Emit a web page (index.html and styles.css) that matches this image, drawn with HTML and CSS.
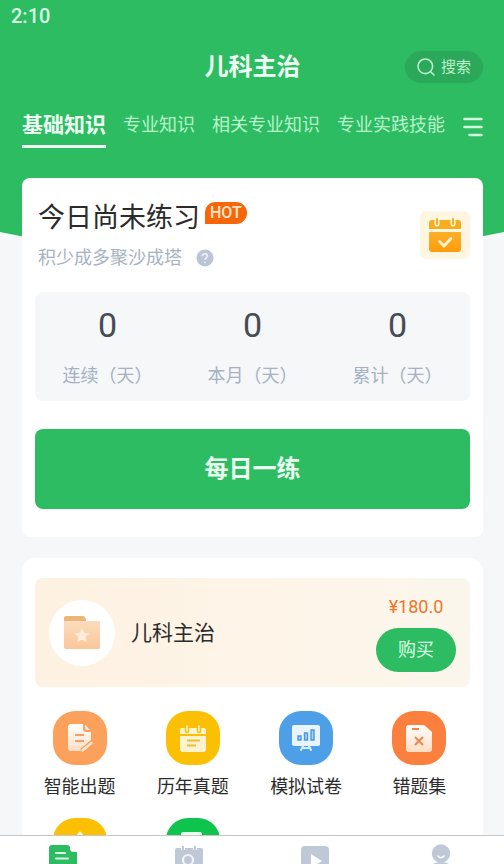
FILE: index.html
```html
<!DOCTYPE html>
<html lang="zh-CN">
<head>
<meta charset="utf-8">
<meta name="viewport" content="width=device-width, initial-scale=1">
<title>儿科主治</title>
<link rel="stylesheet" href="styles.css">
</head>
<body>
<div class="scroll">
  <header class="header">
    <div class="status">2:10</div>
    <div class="titlebar">
      <h1 class="title">儿科主治</h1>
      <button class="search" type="button">
        <svg width="18" height="18" viewBox="0 0 18 18" fill="none" stroke="currentColor" stroke-width="1.6" stroke-linecap="round"><circle cx="8.300" cy="8.300" r="7.300"/><path d="M13.500 13.500 17 17"/></svg>
        搜索
      </button>
    </div>
    <nav class="tabs">
      <a class="tab tab-active" href="#basic">基础知识</a>
      <a class="tab" href="#major">专业知识</a>
      <a class="tab" href="#related">相关专业知识</a>
      <a class="tab" href="#practice">专业实践技能</a>
      <button class="menu" type="button" aria-label="菜单">
        <svg width="20" height="20" viewBox="0 0 20 20" stroke="currentColor" stroke-width="2.600" stroke-linecap="round"><path d="M1.500 2h17M1.500 10h17M6.500 18h12"/></svg>
      </button>
    </nav>
  </header>

  <main class="main">
    <section class="card">
      <div class="practice">
        <div class="practice-text">
          <div class="headline"><h2 class="headline-text">今日尚未练习</h2><span class="hot">HOT</span></div>
          <div class="sub">积少成多聚沙成塔
            <svg width="18" height="18" viewBox="0 0 18 18"><circle cx="9" cy="9" r="8.500" fill="#bcc5d6"/><path d="M6.500 7.200C6.500 3.900 11.600 4 11.500 7c0 1.900-2.500 1.900-2.500 3.700M9 12.700v1.300" fill="none" stroke="#edf1f8" stroke-width="1.600"/></svg>
          </div>
        </div>
        <button class="calendar" type="button" aria-label="打卡日历">
          <svg width="34" height="36" viewBox="0 0 34 36">
            <defs><linearGradient id="cal" x1="0" y1="0" x2="0" y2="1"><stop offset="0" stop-color="#fbb02a"/><stop offset="1" stop-color="#ff9c0b"/></linearGradient></defs>
            <path d="M4 3h26q3 0 3 3v6H1V6q0-3 3-3z" fill="#f8ae1c"/>
            <path d="M1 15h32v17q0 3-3 3H4q-3 0-3-3z" fill="url(#cal)"/>
            <path d="M9 2v5M25 2v5" stroke="#fff6df" stroke-width="5" stroke-linecap="round"/>
            <path d="M9 2v5M25 2v5" stroke="#f8ae1c" stroke-width="2" stroke-linecap="round"/>
            <path d="m11.500 24.500 4.500 4.500 7-7.500" fill="none" stroke="#fff3d6" stroke-width="2.800" stroke-linecap="round"/>
          </svg>
        </button>
      </div>
      <dl class="stats">
        <div class="stat"><dd class="stat-value">0</dd><dt class="stat-label">连续（天）</dt></div>
        <div class="stat"><dd class="stat-value">0</dd><dt class="stat-label">本月（天）</dt></div>
        <div class="stat"><dd class="stat-value">0</dd><dt class="stat-label">累计（天）</dt></div>
      </dl>
      <button class="daily" type="button">每日一练</button>
    </section>

    <section class="card card-course">
      <div class="course">
        <span class="course-icon">
          <svg width="38" height="36" viewBox="0 0 38 36">
            <defs><linearGradient id="fold" x1="0" y1="0" x2="0" y2="1"><stop offset="0" stop-color="#fbdcbc"/><stop offset="1" stop-color="#fbc69b"/></linearGradient></defs>
            <path d="M1 3q0-2 2-2h17q2 0 3 4v5H1z" fill="#ecb67a"/>
            <path d="M1 6h35q1 0 1 1v26q0 1-1 1H3q-2 0-2-2z" fill="url(#fold)"/>
            <path d="m19 13 2.200 4.800 5.300.6-3.900 3.600 1 5.200-4.600-2.600-4.600 2.600 1-5.200-3.900-3.600 5.300-.6z" fill="#ffeddb"/>
          </svg>
        </span>
        <h2 class="course-name">儿科主治</h2>
        <div class="course-buy"><span class="price">¥180.0</span><button class="buy" type="button">购买</button></div>
      </div>
      <div class="grid">
        <a class="tool" href="#smart">
          <svg class="tool-icon orange" viewBox="0 0 54 54">
            <defs><linearGradient id="paper" x1="0" y1="0" x2="0" y2="1"><stop offset="0" stop-color="#fff"/><stop offset="1" stop-color="#ffddc4"/></linearGradient></defs>
            <path d="M18 13h12v5q0 3 3 3h5v8L27 40h-9q-3 0-3-3V16q0-3 3-3z" fill="url(#paper)"/>
            <path d="M32 13.500v3.500q0 2 2 2h3z" fill="#ffe9d8"/>
            <path d="M22 24h9M22 30h9" stroke="#f8a063" stroke-width="1.800"/>
            <path d="m29 40 9.500-8" stroke="#fba15c" stroke-width="5.500"/>
            <path d="m29.500 39.500 9-7.500" stroke="#ffe6d3" stroke-width="2.500" stroke-linecap="round"/>
          </svg>
          <span>智能出题</span>
        </a>
        <a class="tool" href="#past">
          <svg class="tool-icon yellow" viewBox="0 0 54 54">
            <path d="M16 17h22q2 0 2 2v4H14v-4q0-2 2-2z" fill="#fff5d0"/>
            <path d="M14 25h26v13q0 3-3 3H17q-3 0-3-3z" fill="#fff3cf"/>
            <path d="M21 15v5M33 15v5" stroke="#fbc004" stroke-width="4.500" stroke-linecap="round"/>
            <path d="M21 15v5M33 15v5" stroke="#fff5d0" stroke-width="1.600" stroke-linecap="round"/>
            <path d="M21 29.500h13M21 34.500h9" stroke="#eebd32" stroke-width="1.800"/>
          </svg>
          <span>历年真题</span>
        </a>
        <a class="tool" href="#mock">
          <svg class="tool-icon blue" viewBox="0 0 54 54">
            <rect x="13" y="14" width="28" height="21" rx="2" fill="#e8f4ff"/>
            <path d="m24 35-2 4M30 35l2 4M23 37h8" stroke="#d9ecff" stroke-width="2" stroke-linecap="round"/>
            <path d="M19 25h3v4h-3zM25.500 22h3v7h-3zM32 19h3v10h-3z" fill="#a8d3fb" stroke="#4898df" stroke-width="1.400"/>
          </svg>
          <span>模拟试卷</span>
        </a>
        <a class="tool" href="#wrong">
          <svg class="tool-icon red" viewBox="0 0 54 54">
            <path d="M17 14h15l8 7v17q0 3-3 3H17q-3 0-3-3V17q0-3 3-3z" fill="url(#paper)"/>
            <path d="M20 18h7" stroke="#f88247" stroke-width="2"/>
            <path d="m23 26 8 8M31 26l-8 8" stroke="#ed874f" stroke-width="2"/>
          </svg>
          <span>错题集</span>
        </a>
        <a class="tool" href="#favorites" aria-label="收藏">
          <svg class="tool-icon yellow" viewBox="0 0 54 54"><path d="M25 15q2-3 4 0l3 7 9 1-6.500 7 2 10-9.500-5-9.500 5 2-10-6.500-7 9-1z" fill="#fff5d0"/></svg>
        </a>
        <a class="tool" href="#notes" aria-label="笔记">
          <svg class="tool-icon green" viewBox="0 0 54 54"><path d="M17 14h17q2 0 2 3v23H17q-2 0-2-3V16q0-2 2-2z" fill="#e8fff0"/></svg>
        </a>
      </div>
    </section>
  </main>
</div>

<nav class="bottom">
  <a class="nav-item" href="#bank" aria-label="题库">
    <svg width="30" height="30" viewBox="0 0 30 30"><path d="M4 1h15q2 0 3 2v3q1 2 4 2h3v18q0 3-3 3H4q-3 0-3-3V4q0-3 3-3z" fill="#2dbc62"/><path d="M8 9h9M8 14.500h12" stroke="#d9f7e3" stroke-width="2" stroke-linecap="round"/></svg>
  </a>
  <a class="nav-item" href="#exam" aria-label="考试">
    <svg width="30" height="30" viewBox="0 0 30 30"><path d="M3 4h24q2 0 2 2v23H1V6q0-2 2-2z" fill="#bfc8d6"/><path d="M9 2v4M21 2v4" stroke="#fff" stroke-width="4"/><path d="M9 2v4M21 2v4" stroke="#bfc8d6" stroke-width="2"/><circle cx="14" cy="16" r="5" fill="none" stroke="#f1f4f8" stroke-width="2.200"/></svg>
  </a>
  <a class="nav-item" href="#video" aria-label="课程">
    <svg width="30" height="30" viewBox="0 0 30 30"><path d="M5 2h20q4 0 4 4v23H1V6q0-4 4-4z" fill="#bfc8d6"/><path d="m11 10 11 7-11 7z" fill="#fff"/></svg>
  </a>
  <a class="nav-item" href="#me" aria-label="我的">
    <svg width="30" height="30" viewBox="0 0 30 30"><circle cx="15" cy="9.500" r="9.200" fill="#bfc8d6"/><path d="M3 29q0-11 12-11t12 11z" fill="#bfc8d6"/><path d="M12 12q3 3.500 6 0" fill="none" stroke="#fff" stroke-width="1.500" stroke-linecap="round"/></svg>
  </a>
</nav>
</body>
</html>
```
FILE: styles.css
```css
* {
  box-sizing: border-box;
  margin: 0;
}

body {
  display: flex;
  flex-direction: column;
  height: 100vh;
  background: #f5f7f9;
  color: #2b2b2b;
  font-family: Roboto, "Noto Sans CJK SC", sans-serif;
  font-size: 18px;
  line-height: 26px;
}

button {
  padding: 0;
  border: 0;
  background: none;
  color: inherit;
  font: inherit;
}

a {
  color: inherit;
  text-decoration: none;
}

svg {
  display: block;
  flex: none;
}

.scroll {
  flex: 1;
  min-height: 0;
  overflow-y: auto;
  scrollbar-width: none;
}

/* Green header: its lower edge dips towards the middle, behind the first card */
.header {
  padding: 0 21px 134px 22px;
  background: #2dbc62;
  color: #f0fff5;
  clip-path: polygon(0 0, 100% 0, 100% 232px, 50% 100%, 0 232px);
}

.status {
  height: 32px;
  margin-left: -11px;
  color: #d9f9e4;
  font-size: 20px;
  font-weight: 500;
  line-height: 32px;
}

.titlebar {
  display: grid;
  grid-template-columns: 1fr auto 1fr;
  align-items: center;
  height: 70px;
}

.title {
  grid-column: 2;
  font-size: 24px;
  font-weight: 700;
  line-height: 32px;
}

.search {
  display: flex;
  align-items: center;
  justify-content: center;
  justify-self: end;
  gap: 6px;
  width: 78px;
  height: 32px;
  border-radius: 16px;
  background: #2ba859;
  color: #bdf0cd;
  font-size: 15px;
}

.tabs {
  display: flex;
  align-items: center;
  gap: 17px;
  height: 46px;
  white-space: nowrap;
}

.tab {
  color: #b9f3cc;
}

.tab-active {
  height: 46px;
  border-bottom: 3px solid #ecfff2;
  color: #ecfff2;
  font-size: 21px;
  font-weight: 700;
  line-height: 46px;
}

.menu {
  margin-top: 4px;
  margin-left: auto;
  color: #d5f9e0;
}

.main {
  display: grid;
  gap: 21px;
  margin-top: -104px;
  padding: 0 21px 20px 22px;
  position: relative;
}

.card {
  padding: 20px 13px 28px 13px;
  border-radius: 8px;
  background: #fff;
}

.card-course {
  border-radius: 14px;
}

.practice {
  display: flex;
  align-items: center;
  justify-content: space-between;
  height: 74px;
  padding-left: 3px;
}

.headline {
  display: flex;
  align-items: flex-start;
  gap: 5px;
}

.headline-text {
  font-size: 27px;
  font-weight: 400;
  line-height: 38px;
}

.hot {
  margin-top: 3px;
  padding: 0 5px;
  border-radius: 10px 11px 11px 0;
  background: #f76707;
  color: #ffe4cb;
  font-size: 16px;
  font-weight: 500;
  line-height: 22px;
}

.sub {
  display: flex;
  align-items: center;
  gap: 14px;
  margin-top: 8px;
  color: #a6b1c2;
}

.calendar {
  display: grid;
  place-items: center;
  width: 50px;
  height: 48px;
  border-radius: 6px;
  background: #fff6e2;
}

.stats {
  display: grid;
  grid-template-columns: repeat(3, 1fr);
  margin-top: 20px;
  padding: 13px 0 12px;
  border-radius: 8px;
  background: #f5f7f9;
  text-align: center;
}

.stat-value {
  color: #454b57;
  font-size: 34px;
  line-height: 40px;
}

.stat-label {
  margin-top: 18px;
  color: #a6b1c2;
}

.daily {
  display: block;
  width: 100%;
  height: 80px;
  margin-top: 28px;
  border-radius: 8px;
  background: #2dbc62;
  color: #e9fff0;
  font-size: 24px;
  font-weight: 700;
}

.course {
  display: flex;
  align-items: center;
  height: 109px;
  padding: 0 14px;
  border-radius: 8px;
  background: linear-gradient(90deg, #fdf1e1, #fef5e9 60%, #faf6ec);
}

.course-icon {
  display: grid;
  place-items: center;
  width: 66px;
  height: 66px;
  border-radius: 50%;
  background: #fff;
}

.course-name {
  margin-left: 16px;
  font-size: 21px;
  font-weight: 400;
}

.course-buy {
  display: grid;
  justify-items: center;
  gap: 8px;
  margin-left: auto;
}

.price {
  color: #ee7629;
}

.buy {
  width: 80px;
  height: 44px;
  border-radius: 22px;
  background: #2dbc62;
  color: #dcfce6;
}

.grid {
  display: grid;
  grid-template-columns: repeat(4, 1fr);
  row-gap: 18px;
  margin: 24px -6px 0 -12px;
}

.tool {
  display: flex;
  flex-direction: column;
  align-items: center;
  gap: 9px;
}

.tool-icon {
  width: 54px;
  height: 54px;
  border-radius: 22px;
}

.orange { background: #fba15c; }
.yellow { background: #fbc004; }
.blue { background: #4da0e8; }
.red { background: #fb803e; }
.green { background: #0fc34f; }

.bottom {
  display: grid;
  grid-template-columns: repeat(4, 1fr);
  flex: none;
  height: 29px;
  padding-top: 8px;
  overflow: hidden;
  border-top: 1px solid #c4c6c8;
  background: #fff;
}

.nav-item {
  display: flex;
  justify-content: center;
}
```
